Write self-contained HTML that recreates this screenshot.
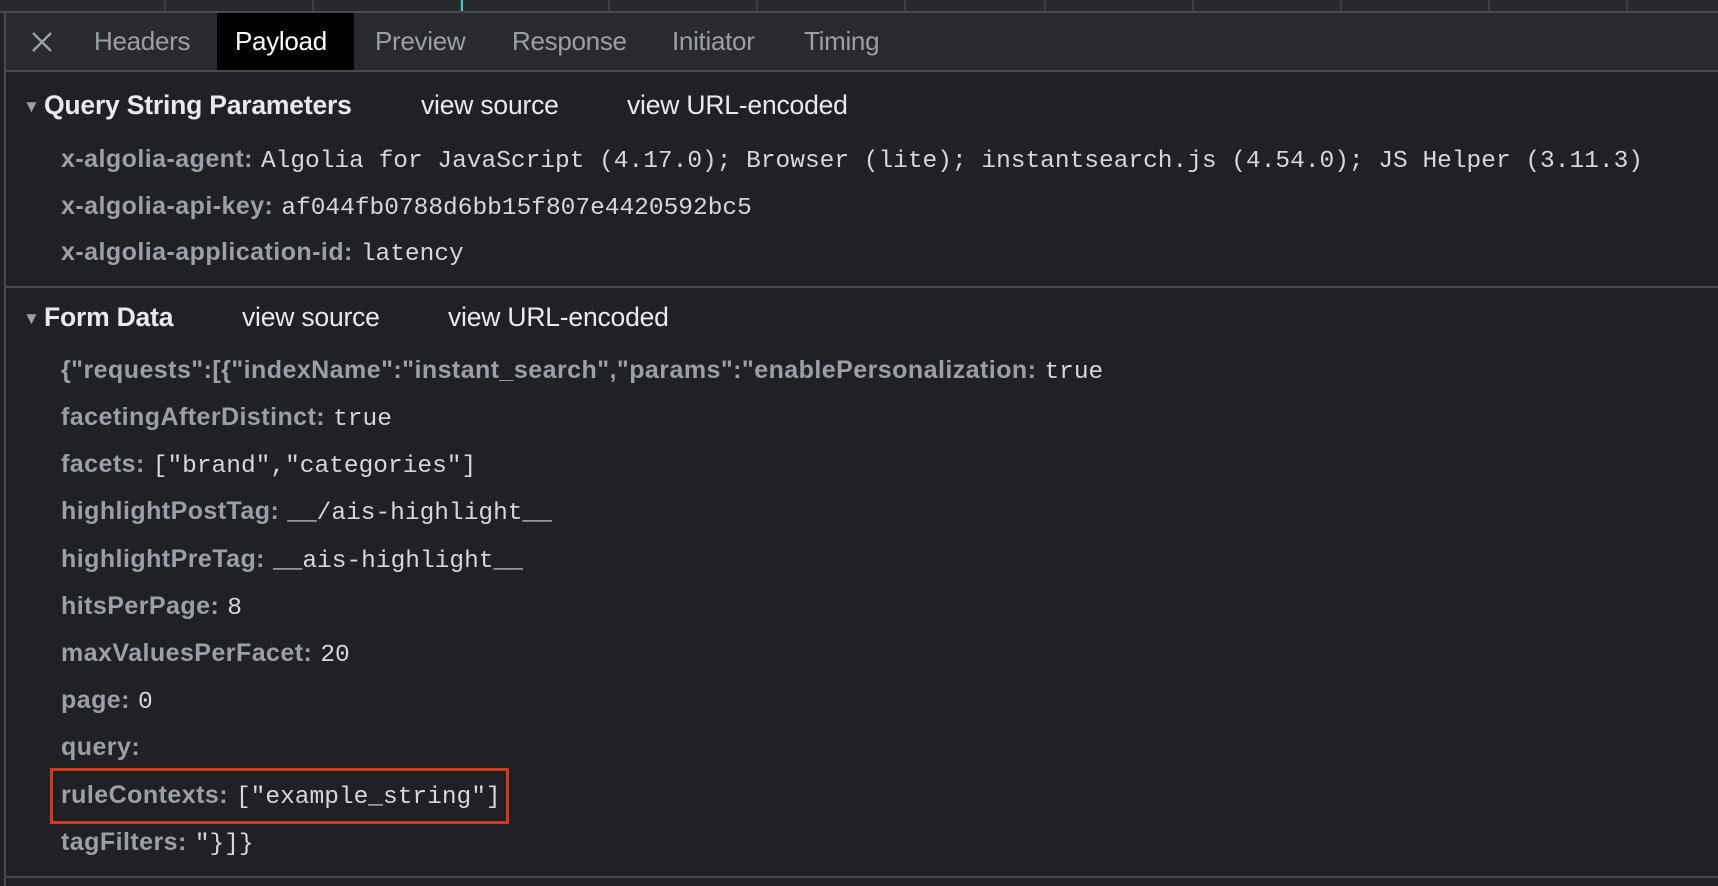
<!DOCTYPE html>
<html><head><style>
html,body{margin:0;padding:0;width:1718px;height:886px;overflow:hidden;background:#202124;font-family:"Liberation Sans",sans-serif;}
.a{position:absolute;white-space:nowrap;}
.top{left:0;top:0;width:1718px;height:11px;background:#28292c;border-bottom:2px solid #4a4b4e;}
.tabs{left:6px;top:13px;width:1712px;height:57px;background:#292a2d;border-bottom:2px solid #4a4b4e;}
.tab{top:13px;height:57px;line-height:57px;font-size:26px;color:#9aa0a6;letter-spacing:-0.3px}
.lbl{font-size:25px;font-weight:bold;color:#9aa0a6;letter-spacing:0.45px}
.val{font-family:"Liberation Mono",monospace;font-size:24.5px;color:#d5d7da;font-weight:normal;margin-left:8px;letter-spacing:0}
.hd{font-size:26.5px;font-weight:bold;color:#e8eaed;letter-spacing:-0.2px}
.lk{font-size:26.5px;color:#e8eaed;letter-spacing:-0.2px}
.tri{font-size:17px;color:#9aa0a6}
.sep{left:6px;width:1712px;height:2px;background:#4a4b4e}
</style></head><body>
<div class="a top"></div>
<div class="a" style="left:164px;top:0;width:2px;height:11px;background:#3c3d40"></div>
<div class="a" style="left:312px;top:0;width:2px;height:11px;background:#3c3d40"></div>
<div class="a" style="left:460px;top:0;width:2px;height:11px;background:#3c3d40"></div>
<div class="a" style="left:461px;top:0;width:2px;height:11px;background:#2fd3c0"></div>
<div class="a" style="left:608px;top:0;width:2px;height:11px;background:#3c3d40"></div>
<div class="a" style="left:756px;top:0;width:2px;height:11px;background:#3c3d40"></div>
<div class="a" style="left:904px;top:0;width:2px;height:11px;background:#3c3d40"></div>
<div class="a" style="left:1044px;top:0;width:2px;height:11px;background:#3c3d40"></div>
<div class="a" style="left:1192px;top:0;width:2px;height:11px;background:#3c3d40"></div>
<div class="a" style="left:1340px;top:0;width:2px;height:11px;background:#3c3d40"></div>
<div class="a" style="left:1488px;top:0;width:2px;height:11px;background:#3c3d40"></div>
<div class="a" style="left:1626px;top:0;width:2px;height:11px;background:#3c3d40"></div>
<div class="a tabs"></div>
<div class="a" style="left:4px;top:11px;width:2px;height:875px;background:#4a4b4e"></div>
<svg class="a" style="left:31px;top:31px" width="22" height="22"><path d="M2 2L20 20M20 2L2 20" stroke="#9aa0a6" stroke-width="2.4"/></svg>
<div class="a tab" style="left:94px">Headers</div>
<div class="a" style="left:217px;top:13px;width:137px;height:57px;background:#000"></div>
<div class="a tab" style="left:235px;color:#fff">Payload</div>
<div class="a tab" style="left:375px">Preview</div>
<div class="a tab" style="left:512px">Response</div>
<div class="a tab" style="left:672px">Initiator</div>
<div class="a tab" style="left:804px">Timing</div>

<div class="a tri" style="left:23px;top:97px">▼</div>
<div class="a hd" style="left:44px;top:90px">Query String Parameters</div>
<div class="a lk" style="left:421px;top:90px">view source</div>
<div class="a lk" style="left:627px;top:90px">view URL-encoded</div>
<div class="a lbl" style="left:61px;top:145px">x-algolia-agent:<span class="val">Algolia for JavaScript (4.17.0); Browser (lite); instantsearch.js (4.54.0); JS Helper (3.11.3)</span></div>
<div class="a lbl" style="left:61px;top:192px">x-algolia-api-key:<span class="val">af044fb0788d6bb15f807e4420592bc5</span></div>
<div class="a lbl" style="left:61px;top:238px">x-algolia-application-id:<span class="val">latency</span></div>
<div class="a sep" style="top:286px"></div>

<div class="a tri" style="left:23px;top:309px">▼</div>
<div class="a hd" style="left:44px;top:302px">Form Data</div>
<div class="a lk" style="left:242px;top:302px">view source</div>
<div class="a lk" style="left:448px;top:302px">view URL-encoded</div>
<div class="a lbl" style="left:61px;top:356px">{"requests":[{"indexName":"instant_search","params":"enablePersonalization:<span class="val">true</span></div>
<div class="a lbl" style="left:61px;top:403px">facetingAfterDistinct:<span class="val">true</span></div>
<div class="a lbl" style="left:61px;top:450px">facets:<span class="val">["brand","categories"]</span></div>
<div class="a lbl" style="left:61px;top:497px">highlightPostTag:<span class="val">__/ais-highlight__</span></div>
<div class="a lbl" style="left:61px;top:545px">highlightPreTag:<span class="val">__ais-highlight__</span></div>
<div class="a lbl" style="left:61px;top:592px">hitsPerPage:<span class="val">8</span></div>
<div class="a lbl" style="left:61px;top:639px">maxValuesPerFacet:<span class="val">20</span></div>
<div class="a lbl" style="left:61px;top:686px">page:<span class="val">0</span></div>
<div class="a lbl" style="left:61px;top:733px">query:</div>
<div class="a lbl" style="left:61px;top:781px">ruleContexts:<span class="val">["example_string"]</span></div>
<div class="a" style="left:50px;top:768px;width:453px;height:50px;border:3px solid #d33a22;"></div>
<div class="a lbl" style="left:61px;top:828px">tagFilters:<span class="val">"}]}</span></div>
<div class="a sep" style="top:876px"></div>
</body></html>
